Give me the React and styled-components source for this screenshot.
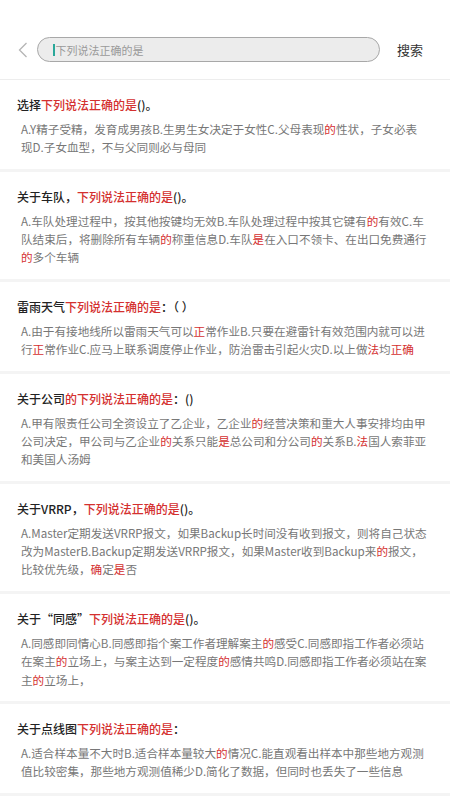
import React from 'react'
import styled, { createGlobalStyle } from 'styled-components'

const GlobalStyle = createGlobalStyle`
  body {
    margin: 0;
    background: #fff;
    font-family: "Noto Sans CJK SC", "Noto Sans", sans-serif;
  }
`

const Page = styled.div`
  width: 450px;
  background: #fff;
`

const Header = styled.div`
  height: 80px;
  box-sizing: border-box;
  padding: 20px 0 0 16px;
  display: flex;
  align-items: center;
  border-bottom: 1px solid #ededed;
`

const BackBtn = styled.div`
  width: 14px;
  height: 18px;
  display: flex;
  align-items: center;
  justify-content: center;
  margin-right: 7px;
`

const SearchBox = styled.div`
  width: 343px;
  height: 25px;
  box-sizing: border-box;
  border: 1px solid #a8a8a8;
  border-radius: 13px;
  background: #ececec;
  display: flex;
  align-items: center;
  padding-left: 15px;
`

const Cursor = styled.span`
  width: 1.5px;
  height: 12px;
  background: #2aa89a;
  margin-right: 1px;
`

const Placeholder = styled.span`
  font-size: 11px;
  color: #9a9a9a;
`

const SearchBtn = styled.div`
  margin-left: 17px;
  font-size: 13px;
  color: #333;
`

const Item = styled.div`
  padding: 15px 17px 12.5px;
  border-bottom: 3px solid #f4f4f4;
`

const Title = styled.div`
  font-size: 12px;
  line-height: 20px;
  color: #222;
  font-weight: 500;
  white-space: nowrap;
`

const Body = styled.div`
  margin-top: 5px;
  padding-left: 4px;
  font-size: 11.6px;
  line-height: 18.2px;
  color: #777;
`

const Line = styled.div`
  white-space: nowrap;
`

const Mark = styled.span`
  color: #d4302f;
`

const rich = (s) =>
  s.split(/(\{[^}]*\})/).map((part, i) =>
    part.startsWith('{') ? <Mark key={i}>{part.slice(1, -1)}</Mark> : part
  )

const items = [
  {
    title: '选择{下列说法正确的是}()。',
    lines: [
      'A.Y精子受精，发育成男孩B.生男生女决定于女性C.父母表现{的}性状，子女必表',
      '现D.子女血型，不与父同则必与母同',
    ],
  },
  {
    title: '关于车队，{下列说法正确的是}()。',
    lines: [
      'A.车队处理过程中，按其他按键均无效B.车队处理过程中按其它键有{的}有效C.车',
      '队结束后，将删除所有车辆{的}称重信息D.车队{是}在入口不领卡、在出口免费通行',
      '{的}多个车辆',
    ],
  },
  {
    title: '雷雨天气{下列说法正确的是}：（ ）',
    lines: [
      'A.由于有接地线所以雷雨天气可以{正}常作业B.只要在避雷针有效范围内就可以进',
      '行{正}常作业C.应马上联系调度停止作业，防治雷击引起火灾D.以上做{法}均{正确}',
    ],
  },
  {
    title: '关于公司{的下列说法正确的是}：()',
    lines: [
      'A.甲有限责任公司全资设立了乙企业，乙企业{的}经营决策和重大人事安排均由甲',
      '公司决定，甲公司与乙企业{的}关系只能{是}总公司和分公司{的}关系B.{法}国人索菲亚',
      '和美国人汤姆',
    ],
  },
  {
    title: '关于VRRP，{下列说法正确的是}()。',
    lines: [
      'A.Master定期发送VRRP报文，如果Backup长时间没有收到报文，则将自己状态',
      '改为MasterB.Backup定期发送VRRP报文，如果Master收到Backup来{的}报文，',
      '比较优先级，{确}定{是}否',
    ],
  },
  {
    title: '关于“同感”{下列说法正确的是}()。',
    lines: [
      'A.同感即同情心B.同感即指个案工作者理解案主{的}感受C.同感即指工作者必须站',
      '在案主{的}立场上，与案主达到一定程度{的}感情共鸣D.同感即指工作者必须站在案',
      '主{的}立场上，',
    ],
  },
  {
    title: '关于点线图{下列说法正确的是}：',
    lines: [
      'A.适合样本量不大时B.适合样本量较大{的}情况C.能直观看出样本中那些地方观测',
      '值比较密集，那些地方观测值稀少D.简化了数据，但同时也丢失了一些信息',
    ],
  },
]

export default function App() {
  return (
    <Page>
      <GlobalStyle />
      <Header>
        <BackBtn>
          <svg width="10" height="16" viewBox="0 0 10 16">
            <path d="M8.5 1 L1.5 8 L8.5 15" fill="none" stroke="#b5b5b5" strokeWidth="1.3" />
          </svg>
        </BackBtn>
        <SearchBox>
          <Cursor />
          <Placeholder>下列说法正确的是</Placeholder>
        </SearchBox>
        <SearchBtn>搜索</SearchBtn>
      </Header>
      {items.map((it, i) => (
        <Item key={i}>
          <Title>{rich(it.title)}</Title>
          <Body>
            {it.lines.map((l, j) => (
              <Line key={j}>{rich(l)}</Line>
            ))}
          </Body>
        </Item>
      ))}
    </Page>
  )
}
